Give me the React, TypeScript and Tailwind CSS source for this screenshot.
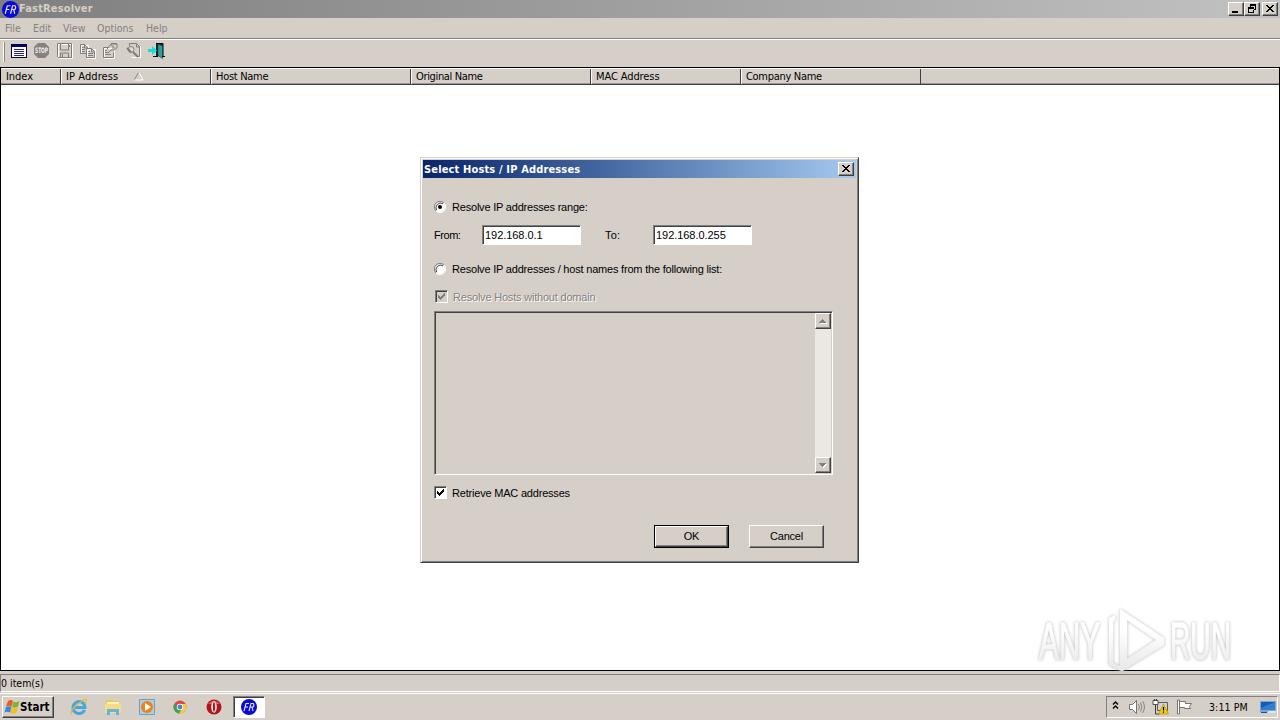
import type { ReactNode } from "react";
import clsx from "clsx";

const tahoma = "font-['DejaVu_Sans_Condensed','DejaVu_Sans',sans-serif] [font-stretch:condensed]";

const columns = [
  { name: "Index", width: "w-[60px]", spacing: "tracking-[-0.05px]" },
  { name: "IP Address", width: "w-[150px]", spacing: "tracking-[0.08px]", sorted: true },
  { name: "Host Name", width: "w-[200px]", spacing: "tracking-[-0.3px]" },
  { name: "Original Name", width: "w-[180px]", spacing: "tracking-[-0.35px]" },
  { name: "MAC Address", width: "w-[150px]", spacing: "tracking-[-0.1px]" },
  { name: "Company Name", width: "w-[180px]", spacing: "tracking-[-0.3px]" },
];

const menus = [
  { name: "File", width: "w-[28px]" },
  { name: "Edit", width: "w-[30px]" },
  { name: "View", width: "w-[34px]" },
  { name: "Options", width: "w-[49px]" },
  { name: "Help", width: "w-[30px]" },
];

const raised =
  "border border-t-white border-l-white border-b-[#404040] border-r-[#404040] shadow-[inset_-1px_-1px_0_#808080]";
const sunken =
  "border border-t-[#808080] border-l-[#808080] border-b-white border-r-white shadow-[inset_1px_1px_0_#404040]";

const FrLogo = ({ size }: { size: number }) => (
  <svg width={size} height={size} viewBox="0 0 16 16" className="shrink-0">
    <circle cx="8" cy="8" r="8" fill="#0808d8" />
    <path
      d="M3 12 L5 4.5 H8 M4 8 H7 M8 12 L10 4.5 H12.3 Q13.6 6.8 12 8 H9.2 M11 8 L12 12"
      fill="none"
      stroke="#e4e4ff"
      strokeWidth="1.1"
    />
  </svg>
);

const CaptionButton = ({ children }: { children: ReactNode }) => (
  <div className={clsx("h-[14px] w-4 bg-[#d5cfc8]", raised)}>
    <svg width="14" height="12" viewBox="0 0 14 12" shapeRendering="crispEdges">
      {children}
    </svg>
  </div>
);

const closeGlyph = (
  <path
    d="M3 2h2v1h1v1h2v-1h1v-1h2v1h-1v1h-1v1h-1v1h1v1h1v1h1v1h-2v-1h-1v-1h-2v1h-1v1h-2v-1h1v-1h1v-1h1v-1h-1v-1h-1v-1h-1z"
    fill="#000"
  />
);

const TitleBar = () => (
  <div className="flex h-[18px] items-center bg-linear-to-r from-[#7f7f7f] to-[#c2c2c2] pr-[2px] pl-[2px]">
    <FrLogo size={17} />
    <span className="grow text-[11px] leading-[18px] font-bold tracking-[0.15px] text-[#d5cfc8]">
      FastResolver
    </span>
    <CaptionButton>
      <path d="M3 8h6v2h-6z" fill="#000" />
    </CaptionButton>
    <CaptionButton>
      <path
        d="M5 1h6v6h-3v-1h2v-3h-4v1h-1zM3 4h6v6h-6zM4 6v3h4v-3z"
        fill="#000"
        fillRule="evenodd"
      />
    </CaptionButton>
    <div className="ml-[2px]">
      <CaptionButton>{closeGlyph}</CaptionButton>
    </div>
  </div>
);

const ToolIcon = ({ children }: { children: ReactNode }) => (
  <svg width="17" height="17" viewBox="0 0 17 17" fill="none" className="mr-[6px] shrink-0 overflow-visible">
    {children}
  </svg>
);

const Toolbar = () => (
  <div className="flex h-[27px] items-start pt-[2px] pl-[3px]">
    <div className="mr-[5px] h-[20px] w-[2px] border-r border-l border-r-[#8a8580] border-l-white" />
    <ToolIcon>
      <path d="M1.500 2.500h15v13h-15z" fill="#fff" stroke="#00004c" shapeRendering="crispEdges" />
      <path d="M2 3h14v2h-14z" fill="#000080" />
      <path d="M4 7.500h10M4 9.500h10M4 11.500h10M4 13.500h10" stroke="#20209c" shapeRendering="crispEdges" />
    </ToolIcon>
    <ToolIcon>
      <path d="M5 1h7l4 4v7l-4 4H5l-4-4V5z" fill="#85817d" />
      <text
        x="2"
        y="11.300"
        fontSize="7.500"
        fontWeight="bold"
        fill="#f4f1ed"
        textLength="13"
        lengthAdjust="spacingAndGlyphs"
      >
        STOP
      </text>
    </ToolIcon>
    <ToolIcon>
      <path d="M2.500 2.500h14v14h-13l-1-1z" stroke="#fff" />
      <path d="M1.500 1.500h14v14h-13l-1-1zM4.500 2v6h8v-6M4.500 15v-4h8v4M6.500 12v3M13.500 3v2" stroke="#817d79" />
    </ToolIcon>
    <ToolIcon>
      <path d="M2.500 3.500h7v8h-7zM8.500 7.500h8v9h-8z" stroke="#fff" />
      <path
        d="M7.500 11.500h-6v-9h4l3 3v1M5.500 3v3h3M3 5.500h1.500M3 7.500h3M3 9.500h3M7.500 6.500h5l3 3v6h-8zM12.500 7v3h3M9 9.500h2M9 11.500h5M9 13.500h5"
        stroke="#817d79"
      />
    </ToolIcon>
    <ToolIcon>
      <path d="M2.500 6.500h10v10h-10z" stroke="#fff" />
      <path
        d="M6.500 5.500h-5v10h10v-5M3 8.500h2M3 10.500h4M3 12.500h6M5 7l4-5h6v4l-3 2h-3l-2 2M9 3l3 2M10 6h3"
        stroke="#817d79"
      />
      <path d="M9 1h6v1h-6z" fill="#817d79" />
    </ToolIcon>
    <ToolIcon>
      <path d="M15.500 4v11.500h-9" stroke="#fff" />
      <path d="M4.500 4v-2.500h7l3 3v10h-2M11.500 2v3h3" stroke="#817d79" />
      <circle cx="6" cy="7.500" r="3" stroke="#817d79" fill="#dedad6" />
      <path d="M2 6l4 4M8 10l5 5" stroke="#817d79" strokeWidth="2" />
    </ToolIcon>
    <ToolIcon>
      <path d="M8 1.500h7v13" stroke="#000" />
      <path d="M8 2h7v12h-7z" fill="#202020" />
      <path d="M10 2l4.500 2v12.500l-4.500-3z" fill="#28a29b" stroke="#173d3b" strokeWidth=".6" />
      <path d="M0 7h4v-3l5 4.500-5 4.500v-3H0z" fill="#13dedc" />
      <path d="M5 14.500h5M14 14.500h3" stroke="#000" />
    </ToolIcon>
  </div>
);

const ListView = () => (
  <div className="h-[604px] border border-black bg-white">
    <div className="flex h-[17px] border-t border-b border-t-white border-b-[#404040] bg-[#d5cfc8] shadow-[inset_0_-1px_0_#9a9691]">
      {columns.map((column, index) => (
        <div
          key={column.name}
          className={clsx(
            "flex h-[15px] border-r border-r-[#404040] text-[11px] leading-[15px]",
            index === 0 ? "pl-[5px]" : "border-l border-l-white pl-[4px]",
            column.width,
            column.spacing
          )}
        >
          {column.name}
          {column.sorted && (
            <svg width="10" height="9" viewBox="0 0 10 9" fill="none" className="mt-[3px] ml-[16px]">
              <path d="M.5 7.500L4.500.5" stroke="#8a8682" />
              <path d="M5 .5l4 7.500H1" stroke="#fff" />
            </svg>
          )}
        </div>
      ))}
    </div>
  </div>
);

const Radio = ({ checked }: { checked?: boolean }) => (
  <svg width="12" height="12" viewBox="0 0 12 12" fill="none" className="shrink-0">
    <circle cx="6" cy="6" r="5" fill="#fff" />
    <path d="M2 10A5.500 5.500 0 0 1 10 2" stroke="#808080" />
    <path d="M2.600 9A4.600 4.600 0 0 1 9 2.800" stroke="#404040" />
    <path d="M10 2A5.500 5.500 0 0 1 2 10" stroke="#fff" />
    {checked && <circle cx="6" cy="6" r="2" fill="#000" />}
  </svg>
);

const Checkbox = ({ disabled }: { disabled?: boolean }) => (
  <div className={clsx("h-[13px] w-[13px] shrink-0", sunken, disabled ? "bg-[#d5cfc8]" : "bg-white")}>
    <svg width="11" height="11" viewBox="0 0 11 11" shapeRendering="crispEdges">
      <path
        d="M2 4h1v1h1v1h1v-1h1v-1h1v-1h1v-1h1v3h-1v1h-1v1h-1v1h-1v1h-1v-1h-1v-1h-1z"
        fill={disabled ? "#808080" : "#000"}
      />
    </svg>
  </div>
);

const ScrollButton = ({ down }: { down?: boolean }) => (
  <div className={clsx("flex h-4 w-4 items-center justify-center bg-[#d5cfc8]", raised)}>
    <svg width="8" height="5" viewBox="0 0 8 5" shapeRendering="crispEdges">
      <path d={down ? "M1 1h7l-3.500 4z" : "M1 5h7l-3.500-4z"} fill="#fff" />
      <path d={down ? "M0 0h7l-3.500 4z" : "M0 4h7l-3.500-4z"} fill="#808080" />
    </svg>
  </div>
);

const SelectHostsDialog = () => (
  <div className="absolute top-[157px] left-[420px] h-[406px] w-[439px] border border-t-[#d5cfc8] border-r-[#404040] border-b-[#404040] border-l-[#d5cfc8] bg-[#d5cfc8] font-['Liberation_Sans',sans-serif] text-[11px] leading-[14px] tracking-[-0.2px] shadow-[inset_1px_1px_0_#fff,inset_-1px_-1px_0_#808080]">
    <div className="mx-[2px] mt-[2px] flex h-[18px] items-center justify-between bg-linear-to-r from-[#0a246a] to-[#a6caf0] pr-[2px] pl-[1px]">
      <span className={clsx("mt-[1px] text-[11px] font-bold tracking-[0.15px] text-white", tahoma)}>
        Select Hosts / IP Addresses
      </span>
      <CaptionButton>{closeGlyph}</CaptionButton>
    </div>
    <div className="pl-[13px]">
      <div className="mt-[22px] flex h-[14px] items-center">
        <Radio checked />
        <span className="ml-[6px]">Resolve IP addresses range:</span>
      </div>
      <div className="mt-[11px] flex h-5 items-center">
        <span className="w-[48px] tracking-[-0.45px]">From:</span>
        <div className={clsx("h-5 w-[99px] bg-white pt-[2px] pl-[2px] tracking-[-0.05px]", sunken)}>192.168.0.1</div>
        <span className="ml-[24px] w-[48px] tracking-[0.2px]">To:</span>
        <div className={clsx("h-5 w-[99px] bg-white pt-[2px] pl-[2px] tracking-[-0.05px]", sunken)}>192.168.0.255</div>
      </div>
      <div className="mt-[17px] flex h-[14px] items-center">
        <Radio />
        <span className="ml-[6px]">Resolve IP addresses / host names from the following list:</span>
      </div>
      <div className="mt-[14px] flex h-[13px] items-center pl-[1px]">
        <Checkbox disabled />
        <span className="ml-[5px] text-[#85817d] [text-shadow:1px_1px_0_#fff]">Resolve Hosts without domain</span>
      </div>
      <div className={clsx("mt-[8px] flex h-[164px] w-[399px] justify-end p-[1px]", sunken)}>
        <div className="flex w-4 flex-col justify-between bg-[#ebe8e4]">
          <ScrollButton />
          <ScrollButton down />
        </div>
      </div>
      <div className="mt-[11px] flex h-[13px] items-center">
        <Checkbox />
        <span className="ml-[5px]">Retrieve MAC addresses</span>
      </div>
      <div className="mt-[26px] flex gap-5 pl-[220px]">
        <div className="h-[23px] w-[75px] border border-black">
          <div className={clsx("h-full text-center leading-[19px]", raised)}>OK</div>
        </div>
        <div className={clsx("h-[23px] w-[75px] text-center leading-[21px]", raised)}>Cancel</div>
      </div>
    </div>
  </div>
);

const Watermark = () => (
  <svg
    width="204"
    height="72"
    viewBox="0 0 204 72"
    className="absolute top-[605px] left-[1034px] overflow-visible [filter:drop-shadow(0_0_1.5px_#b4b4b4)]"
    fontFamily="'Liberation Sans Narrow', 'Liberation Sans', sans-serif"
    fontSize="51"
    fill="url(#sheen)"
    stroke="url(#sheen)"
    strokeWidth="1.5"
  >
    <linearGradient id="sheen" gradientUnits="userSpaceOnUse" x1="0" y1="10" x2="0" y2="60">
      <stop offset="0.3" stopColor="#fff" />
      <stop offset="1" stopColor="#ebebeb" />
    </linearGradient>
    <text x="5" y="54" textLength="61" lengthAdjust="spacingAndGlyphs">
      ANY
    </text>
    <text x="136" y="54" textLength="61" lengthAdjust="spacingAndGlyphs">
      RUN
    </text>
    <path d="M75 13l6-3v5l-2 2v41l9 4v4l-13-6z" strokeWidth="0.5" />
    <path d="M86 4l44 29v4L86 64zM93 15v39l29-19z" fillRule="evenodd" strokeWidth="0.5" />
    <path d="M88 66v-5l42-26v5z" strokeWidth="0.5" />
  </svg>
);

const WindowsFlag = () => (
  <svg width="16" height="16" viewBox="0 0 16 16" className="shrink-0">
    <path d="M4 2q3-2 5 0L7.500 7.500Q5 6 2 7.500z" fill="#e95b26" />
    <path d="M9.500 2.500q3 1.500 6-.5L14 7.500q-3 2-6 .5z" fill="#78b82a" />
    <path d="M2 8q3-1.500 5.500 0L6 13.500q-3-1.500-5.500 0z" fill="#3d86d6" />
    <path d="M8 8.500q3 1.500 6-.5l-1.500 5.500q-3 2-6 .5z" fill="#f7bd20" />
  </svg>
);

const QuickLaunch = () => (
  <>
    <svg width="18" height="18" viewBox="0 0 18 18" fill="none" className="ml-[16px]">
      <path d="M14.500 12A6 6 0 1 1 15 9.500H5" stroke="#43a7df" strokeWidth="3" />
      <path d="M2 16Q-1 13 8 6T16 2q1 1-1 4" stroke="#e7b934" strokeWidth="1.300" />
    </svg>
    <svg width="18" height="18" viewBox="0 0 18 18" className="ml-[16px]">
      <path d="M2 2h5l1 1h7v12H2z" fill="#e8c75b" />
      <path d="M3 4h12v3H3z" fill="#fff4b0" />
      <path d="M1 6h16v9H1z" fill="#f4dc87" />
      <path d="M3 17v-6h12v6h-3v-3H6v3z" fill="#65b4dd" />
    </svg>
    <svg width="18" height="18" viewBox="0 0 18 18" className="ml-[16px]">
      <path d="M1.500 1.500h15v15h-15z" fill="#a9cfea" stroke="#6d9fc4" />
      <circle cx="9" cy="9" r="6" fill="#ee8213" />
      <path d="M7 5l6 4-6 4z" fill="#fff" />
    </svg>
    <svg width="16" height="16" viewBox="0 0 16 16" className="ml-[16px]">
      <circle cx="8" cy="8" r="6.500" fill="#e1483b" />
      <path d="M2.400 4.700A6.500 6.500 0 0 0 7 14.400L10 9 6 9z" fill="#36a455" />
      <path d="M8 5h5.800A6.500 6.500 0 0 1 7 14.400L10.500 9z" fill="#f6cd3c" />
      <circle cx="8" cy="8" r="3.200" fill="#fff" />
      <circle cx="8" cy="8" r="2.400" fill="#4584d8" />
    </svg>
    <svg width="16" height="16" viewBox="0 0 16 16" className="ml-[18px]">
      <circle cx="8" cy="8" r="7.500" fill="#b3141c" />
      <path d="M2 5Q8-2 14 5z" fill="#dc5b5b" />
      <ellipse cx="8" cy="8" rx="2.800" ry="5.800" fill="#f4e8e6" />
      <ellipse cx="8" cy="8" rx="1.100" ry="4.800" fill="#a51820" />
    </svg>
  </>
);

const Tray = () => (
  <div className="mr-[2px] ml-auto flex h-[22px] w-[172px] items-center border border-t-[#808080] border-r-white border-b-white border-l-[#808080]">
    <svg width="7" height="9" viewBox="0 0 7 9" fill="none" className="mb-[3px] ml-[5px]">
      <path d="M1 3.500l2.500-2.500L6 3.500M1 7.500l2.500-2.500L6 7.500" stroke="#000" strokeWidth="1.400" />
    </svg>
    <svg width="18" height="16" viewBox="0 0 18 16" fill="none" className="ml-[9px]">
      <path d="M1.500 5.500h3l4-4v13l-4-4h-3z" fill="#fff" stroke="#77736f" />
      <path d="M10.500 5q2 3 0 6M12.500 3.500q3 4.500 0 9M14.500 2q4 6 0 12" stroke="#8a8682" />
    </svg>
    <svg width="18" height="16" viewBox="0 0 18 16" fill="none" className="ml-[6px]">
      <path d="M5.500 3.500h10v8h-10z" fill="#d5d2cf" stroke="#5e5b58" />
      <path d="M1 1.500h5v4h-5z" fill="#fff" stroke="#55514e" />
      <path d="M2.500 0v2M4.500 0v2M3.500 6v9h4" stroke="#403e3c" />
      <path d="M11.500 5l5 10h-10z" fill="#f4cc10" stroke="#b78f00" strokeWidth=".7" />
      <path d="M11.500 8v3.500M11.500 12.500v1.300" stroke="#000" strokeWidth="1.200" />
    </svg>
    <svg width="17" height="16" viewBox="0 0 17 16" fill="none" className="ml-[6px]">
      <path d="M1.500 1v14h2v-14z" fill="#fff" stroke="#77736f" />
      <path d="M3.500 2.500h6v2h6l-2 3 1 2H8.500v-1h-5z" fill="#fff" stroke="#77736f" />
    </svg>
    <span className="mt-[1px] ml-[16px] w-[41px] text-[10.5px] tracking-[0.1px] whitespace-nowrap">3:11 PM</span>
    <svg width="17" height="14" viewBox="0 0 17 14" className="ml-[10px]">
      <path d="M0 1h16v11H0z" fill="#75a8dd" />
      <path d="M1 2h14v8H1z" fill="#185bb5" />
      <path d="M1 8l14-6v8H1z" fill="#347ccc" />
      <path d="M1 12h6v1H1z" fill="#1b4f91" />
      <path d="M8 11h8v2H8z" fill="#dce7ef" />
    </svg>
  </div>
);

const Taskbar = () => (
  <div className="flex h-[27px] items-start border-t border-white pt-[2px] pl-[2px]">
    <div className={clsx("flex h-[22px] w-[52px] items-center pl-[1px]", raised)}>
      <WindowsFlag />
      <span className="mt-[1px] text-[11.5px] font-bold">Start</span>
    </div>
    <div className="flex h-[22px] items-center">
      <QuickLaunch />
      <div className={clsx("ml-[11px] flex h-[22px] w-[32px] items-center justify-center bg-white", sunken)}>
        <FrLogo size={16} />
      </div>
    </div>
    <Tray />
  </div>
);

export default function App() {
  return (
    <div className={clsx("relative h-[720px] w-[1280px] overflow-hidden bg-[#d5cfc8] text-black select-none", tahoma)}>
      <TitleBar />
      <div className="flex h-5 items-center pl-[5px] text-[10.5px] text-[#85817d]">
        {menus.map((menu) => (
          <span key={menu.name} className={clsx("mt-[1px]", menu.width)}>
            {menu.name}
          </span>
        ))}
      </div>
      <div className="h-[2px] border-t border-b border-t-[#808080] border-b-white" />
      <Toolbar />
      <ListView />
      <div className="h-[22px] pt-[3px]">
        <div className="h-[18px] border border-t-[#808080] border-r-white border-b-white border-l-[#808080] text-[10.5px] leading-[17px]">
          0 item(s)
        </div>
      </div>
      <Taskbar />
      <Watermark />
      <SelectHostsDialog />
    </div>
  );
}
